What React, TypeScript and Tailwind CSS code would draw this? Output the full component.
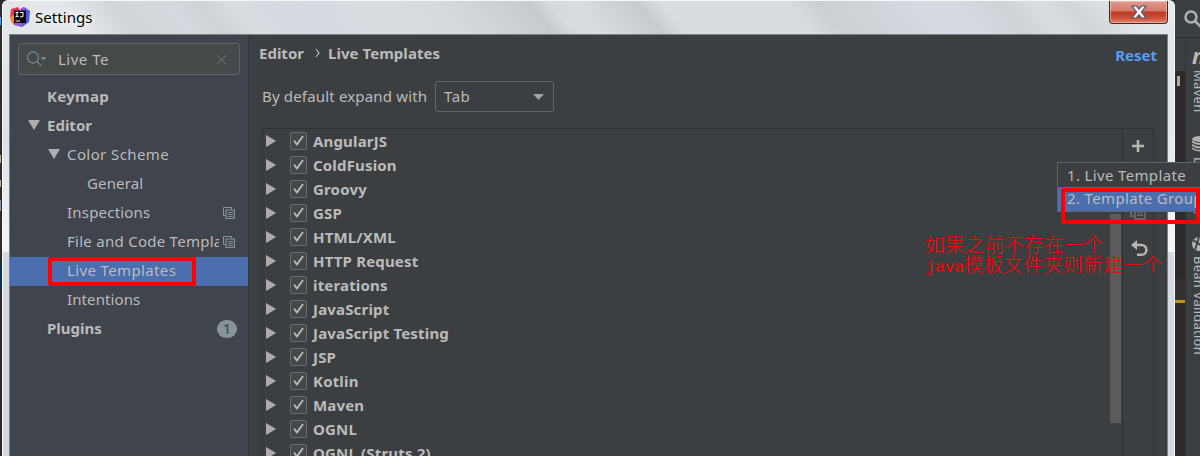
import React from "react";

type Node = { label: string; pad: string; bold?: boolean; open?: boolean; copy?: boolean; selected?: boolean; badge?: string; track: string };

const nodes: Node[] = [
  { label: "Keymap", pad: "pl-[37px]", bold: true, track: "tracking-[0.3px]" },
  { label: "Editor", pad: "pl-[18px]", bold: true, open: true, track: "tracking-[0px]" },
  { label: "Color Scheme", pad: "pl-[38px]", open: true, track: "tracking-[0.4px]" },
  { label: "General", pad: "pl-[77px]", track: "tracking-[0.15px]" },
  { label: "Inspections", pad: "pl-[57px]", copy: true, track: "tracking-[0.2px]" },
  { label: "File and Code Templates", pad: "pl-[57px]", copy: true, track: "tracking-[0.27px]" },
  { label: "Live Templates", pad: "pl-[57px]", selected: true, track: "tracking-[0.37px]" },
  { label: "Intentions", pad: "pl-[57px]", track: "tracking-[0.1px]" },
  { label: "Plugins", pad: "pl-[37px]", bold: true, badge: "1", track: "tracking-[0px]" },
];

const groups = [
  "AngularJS", "ColdFusion", "Groovy", "GSP", "HTML/XML", "HTTP Request", "iterations",
  "JavaScript", "JavaScript Testing", "JSP", "Kotlin", "Maven", "OGNL", "OGNL (Struts 2)",
];

function CopyIcon() {
  return (
    <svg width="12" height="12" viewBox="0 0 12 12" fill="none" stroke="#8a959c" className="shrink-0">
      <path d="M2.500 8.500H.5V.5h8v2" />
      <path d="M3 3h8.500v8.500H3z" strokeWidth="1.200" />
      <path d="M5 5.500h5M5 7.500h5M5 9.500h5" strokeWidth=".9" />
    </svg>
  );
}

function Logo() {
  return (
    <svg width="20" height="20" viewBox="0 0 20 20" className="shrink-0">
      <path d="M1 2 8 0l3 5-5 8-6-3z" fill="#f5325b" />
      <path d="M0 10 3 8l5 8-4 2-3-3z" fill="#fb8b24" />
      <path d="m11 2 3-2 6 4-1 11-7 5-8-2 4-8z" fill="#4a5be0" />
      <path d="m3 15 4-3 6 6-2 1-7-1z" fill="#b454c8" />
      <path d="m10 2 4-2 2 4z" fill="#9b53e6" />
      <path d="M4 3.500h12v12.500H4z" fill="#100c10" />
      <path d="M5.500 5.500h3M7 5.500v4M5.500 9.500h3M10 5.500h3v3.200q0 1-1.200 1H10M5.500 14h4.500" stroke="#eee" strokeWidth="1.100" fill="none" />
    </svg>
  );
}

function Sidebar() {
  return (
    <aside className="flex h-full w-[239px] shrink-0 flex-col border-r border-[#33363b] bg-[#40444d]">
      <div className="mt-[8px] ml-[8px] flex h-[32px] w-[222px] shrink-0 items-center rounded-[3px] border border-[#606466] bg-[#45494a]">
        <svg width="22" height="18" viewBox="0 0 22 18" className="ml-[7px] shrink-0" fill="none" stroke="#748893" strokeWidth="1.300">
          <circle cx="7" cy="7.500" r="5.500" />
          <path d="m11 11.500 4 4" />
          <path d="M14.500 7h6l-3 3.500z" fill="#748893" stroke="none" />
        </svg>
        <span className="ml-[10px] flex-1 text-[15px] tracking-[0.5px]">Live Te</span>
        <svg width="11" height="11" viewBox="0 0 11 11" className="mr-[12px]" stroke="#72797c"><path d="m1 1 9 9m0-9-9 9" /></svg>
      </div>
      <nav className="mt-[8px] flex flex-col">
        {nodes.map((n) => (
          <div key={n.label} className={`flex h-[29px] shrink-0 items-center pb-[2px] text-[15px] ${n.pad} ${n.selected ? "bg-[#4b6eaf]" : ""}`}>
            {n.open && (
              <svg width="12" height="10" viewBox="0 0 12 10" className="mr-[7px] mb-[1px] shrink-0"><path d="M0 0h12L6 10z" fill="#adadad" /></svg>
            )}
            <span className={`min-w-0 flex-1 overflow-hidden whitespace-nowrap ${n.bold ? "font-bold" : ""} ${n.track}`}>{n.label}</span>
            {n.copy && <div className="mr-[13px] ml-[4px]"><CopyIcon /></div>}
            {n.badge && (
              <span className="mr-[11px] flex h-[18px] w-[20px] items-center justify-center rounded-full bg-[#87939a] text-[15px] text-[#40444d]">{n.badge}</span>
            )}
          </div>
        ))}
      </nav>
    </aside>
  );
}

function TemplateRow({ name }: { name: string }) {
  return (
    <div className="flex h-[24px] shrink-0 items-center">
      <svg width="10" height="12" viewBox="0 0 10 12" className="ml-[3px]"><path d="M0 0v12l10-6z" fill="#adadad" /></svg>
      <svg width="18" height="18" viewBox="0 0 18 18" fill="none" className="ml-[14px]">
        <rect x=".5" y=".5" width="16" height="17" rx="1.500" fill="#43494a" stroke="#6b6b6b" />
        <path d="m4 8.500 3 4L13 4" stroke="#bbb" strokeWidth="1.900" />
      </svg>
      <span className="ml-[5px] text-[15px] font-bold tracking-[0.17px] whitespace-nowrap">{name}</span>
    </div>
  );
}

function Main() {
  return (
    <main className="flex h-full min-w-0 flex-1 flex-col bg-[#3c3f41]">
      <header className="flex h-[36px] shrink-0 items-center text-[15px] font-bold">
        <span className="ml-[10px]">Editor</span>
        <svg width="5" height="10" viewBox="0 0 5 10" fill="none" stroke="#bbb" strokeWidth="1.200" className="mr-[8px] ml-[11px]"><path d="m1 1 3 4-3 4" /></svg>
        <span className="tracking-[0.05px]">Live Templates</span>
        <span className="mt-[4px] mr-[10px] ml-auto text-[#589df6]">Reset</span>
      </header>
      <div className="mt-[10px] ml-[13px] flex h-[31px] shrink-0 items-center text-[15px]">
        <span className="w-[173px] tracking-[0.17px] whitespace-nowrap">By default expand with</span>
        <div className="flex h-[31px] w-[119px] items-center justify-between rounded-[3px] border border-[#646464] pr-[9px] pl-[8px]">
          <span className="tracking-[0.5px]">Tab</span>
          <svg width="11" height="6" viewBox="0 0 11 6"><path d="M0 0h11L5.500 6z" fill="#a0a2a4" /></svg>
        </div>
      </div>
      <div className="mt-[16px] ml-[13px] flex min-h-0 w-[892px] flex-1 border border-b-0 border-[#2f3234]">
        <div className="flex min-w-0 flex-1 flex-col overflow-hidden">
          {groups.map((g) => <TemplateRow key={g} name={g} />)}
        </div>
        <div className="mt-[85px] mr-px h-[209px] w-[11px] bg-[#595b5c]" />
        <div className="flex w-[31px] flex-col items-center border-l border-[#2f3234]">
          <svg width="12" height="12" viewBox="0 0 12 12" className="mt-[11px]" stroke="#b5b5b5" strokeWidth="2.600"><path d="M6 0v12M0 6h12" /></svg>
          <svg width="16" height="16" viewBox="0 0 16 16" className="mt-[52px]" fill="none" stroke="#626466" strokeWidth="2"><path d="M1 0v12h4M5 4h10v11H5zM7 8h6M7 11h6" /></svg>
          <svg width="17" height="17" viewBox="0 0 17 17" className="mt-[20px] ml-[2px]" fill="none"><path d="M4 5h6.500a4.700 4.700 0 0 1 0 9.800H6" stroke="#b5b5b5" strokeWidth="2.500" /><path d="M6 0v10L0 5z" fill="#b5b5b5" /></svg>
        </div>
      </div>
    </main>
  );
}

function ToolStrip() {
  return (
    <div className="flex h-full min-w-0 flex-1 flex-col overflow-hidden bg-[#3c3f41]">
      <div className="flex h-[38px] shrink-0 items-start overflow-hidden border-b border-[#2b2b2b]">
        <svg width="18" height="18" viewBox="0 0 18 18" fill="none" stroke="#afb1b3" strokeWidth="2.500" className="mt-[10px] ml-[9px] shrink-0"><circle cx="7" cy="7" r="5.500" /><path d="m11 11 6 6" /></svg>
      </div>
      <div className="flex min-h-0 flex-1">
        <div className="flex w-[11px] shrink-0 flex-col border-r border-[#323232] bg-[#2b2b2b]">
          <div className="h-[33px] bg-[#3c3f41]" />
          <div className="mt-[5px] ml-[2px] h-[10px] w-[3px] bg-[#aaa]" />
          <div className="mt-[193px] h-[21px] bg-[#323232]" />
          <div className="h-[3px] bg-[#be9117]" />
        </div>
        <div className="flex min-w-0 flex-1 flex-col overflow-hidden pl-[6px] text-[12px] leading-[14px] text-[#bbb]">
          <span className="mt-[7px] h-[22px] text-[22px] leading-[20px] font-bold italic">m</span>
          <span className="mt-[3px] h-[42px] w-[14px] text-[13px] tracking-[0.3px] [writing-mode:vertical-rl]">Maven</span>
          <svg width="16" height="16" viewBox="0 0 16 16" className="mt-[24px] shrink-0" fill="#afb1b3"><ellipse cx="8" cy="3" rx="8" ry="3" /><path d="M0 4.500q8 5 16 0v2q-8 5-16 0zM0 8q8 5 16 0v2q-8 5-16 0zM0 11.500q8 5 16 0V13q-8 5-16 0z" /></svg>
          <span className="mt-[5px] h-[78px] w-[14px] text-[13px] [writing-mode:vertical-rl]">Database</span>
          <svg width="14" height="14" viewBox="0 0 14 14" className="mt-[2px] shrink-0"><circle cx="7" cy="7" r="7" fill="#afb1b3" /><path d="m1 3 12 8M7 0 3 13" stroke="#3c3f41" strokeWidth="1.800" /></svg>
          <span className="mt-[5px] h-[100px] w-[14px] text-[13px] tracking-[0.25px] whitespace-nowrap [writing-mode:vertical-rl]">Bean Validation</span>
        </div>
      </div>
    </div>
  );
}

export default function App() {
  return (
    <div className="relative flex h-[456px] w-[1200px] overflow-hidden bg-[#2b2d30] font-['Noto_Sans','Noto_Sans_CJK_SC',sans-serif] text-[#bbbbbb]">
      <div className="flex w-[2px] shrink-0 flex-col bg-[#2b2b30]">
        <div className="mt-[17px] h-[8px] w-px bg-[#5ba3d2]" />
        <div className="mt-[130px] h-[8px] w-px bg-[#b9b58a]" />
        <div className="mt-[17px] h-[7px] w-px bg-[#b9b58a]" />
        <div className="mt-[13px] h-[11px] w-px bg-[#8a949f]" />
        <div className="mt-[54px] h-[24px] w-px bg-[#063052]" />
      </div>
      <div className="flex w-[1173px] shrink-0 flex-col overflow-hidden rounded-t-[6px] border-x border-t border-[#f5f7f8] bg-[#d5dae0]">
        <div className="flex h-[33px] shrink-0 items-start bg-[linear-gradient(50deg,#e3e6e8_0,#e5e8ea_7%,#d2d6da_11%,#d5dae0_16%,#ced3d7_18.5%,#d8dde1_21%,#d5dae3_26%,#d8dde1_32%,#d6dbde_38%,#c6cbce_46%,#d6dbde_47.8%,#d8dde0_50%,#c6cbce_55%,#d8dde0_57%,#d8dde0_67.5%,#cbd0d3_70%,#d5d9e1_78%,#d5d9e1_82%,#ced3d7_85.500%,#d8dde0_88%,#d8dde0_89%,#d1d6da_91%,#e3e6e9_96%,#e6e9ec_100%)]">
          <div className="mt-[6px] ml-[7px]"><Logo /></div>
          <span className="mt-[4px] ml-[5px] text-[15px] leading-[24px] tracking-[0.05px] text-black [text-shadow:0_0_8px_white]">Settings</span>
          <div className="mr-[6px] ml-auto flex h-[23px] w-[59px] items-center justify-center rounded-b-[4px] border border-t-0 border-[#4b2421] bg-[linear-gradient(#df9a8d_0%,#d47a6b_45%,#bc3925_50%,#cb4d36_75%,#e0836c_100%)] shadow-[inset_0_0_1px_1px_rgba(255,215,200,0.55)]">
            <svg width="18" height="16" viewBox="0 0 18 16"><path d="M2 2h4.500l2.500 3L11.500 2H16l-4.500 6L16 14h-4.500L9 11l-2.500 3H2l4.500-6z" fill="#f2f2f2" stroke="#575463" strokeWidth="1.200" /></svg>
          </div>
        </div>
        <div className="flex min-h-0 flex-1">
          <div className="flex w-[6px] shrink-0 flex-col">
            <div className="h-[218px] bg-[linear-gradient(#e3e6ea,#dce1e8_50%,#f5f6f8)]" />
            <div className="flex-1 bg-[#d5dae1]" />
          </div>
          <div className="flex min-w-0 flex-1 border-x border-t border-[#7c8182]">
            <Sidebar />
            <Main />
          </div>
          <div className="flex w-[6px] shrink-0 flex-col">
            <div className="h-[85px] bg-[#e2e5e9]" />
            <div className="h-[133px] bg-[linear-gradient(#e2e5e9,#f5f6f8)]" />
            <div className="flex-1 bg-[#d5dae1]" />
          </div>
        </div>
      </div>
      <ToolStrip />

      <div className="absolute top-[162px] left-[1057px] w-[144px] border border-[#616365] bg-[#3c3f41] text-[15px] tracking-[0.35px] whitespace-nowrap">
        <div className="h-[24px] pl-[9px] leading-[25px]">1. Live Template</div>
        <div className="h-[24px] bg-[#4b6eaf] pl-[9px] leading-[23px]">2. Template Group</div>
      </div>
      <div className="absolute top-[188px] left-[1061px] h-[36px] w-[139px] rounded-[2px] border-4 border-[#ff0000]" />
      <div className="absolute top-[257px] left-[48px] h-[29px] w-[148px] rounded-[2px] border-4 border-[#ff0000]" />
      <div className="absolute top-[237px] left-[925px] font-['Liberation_Mono','Noto_Sans_CJK_SC',monospace] text-[19.5px] leading-[20px] font-light tracking-[0.4px] whitespace-nowrap text-[#ff0000]">
        <p>如果之前不存在一个</p>
        <p><span className="text-[16.67px] tracking-[-0.3px]">java</span>模板文件夹则新建一个</p>
      </div>
    </div>
  );
}
